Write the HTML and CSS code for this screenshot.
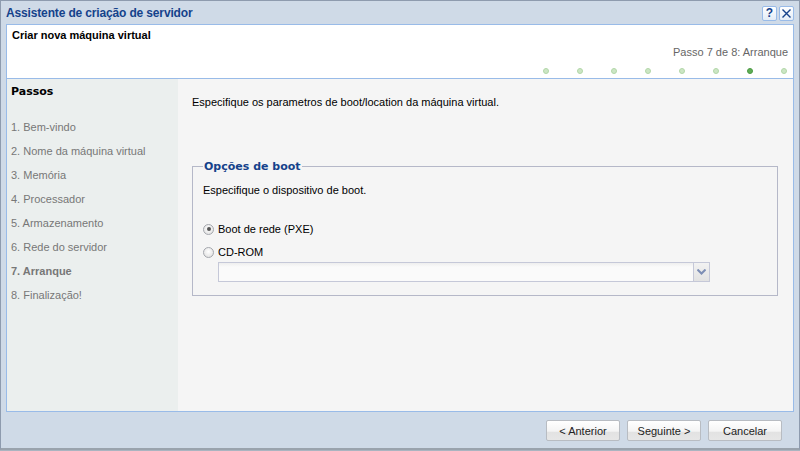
FILE: index.html
```html
<!DOCTYPE html>
<html lang="pt">
<head>
<meta charset="utf-8">
<title>Assistente de criação de servidor</title>
<link rel="stylesheet" href="styles.css">
</head>
<body>
<div class="win">
  <div class="titlebar">
    <span class="title">Assistente de criação de servidor</span>
    <div class="tools">
      <span class="tool">?</span>
      <span class="tool">
        <svg width="11" height="11" viewBox="0 0 11 11"><path d="M1.5 1.5 L9.5 9.5 M9.5 1.5 L1.5 9.5" stroke="#15428b" stroke-width="1.4" fill="none"/></svg>
      </span>
    </div>
  </div>
  <div class="header">
    <div class="h-title">Criar nova máquina virtual</div>
    <div class="h-step">Passo 7 de 8: Arranque</div>
    <div class="dots">
      <span class="dot"></span><span class="dot"></span><span class="dot"></span><span class="dot"></span>
      <span class="dot"></span><span class="dot"></span><span class="dot cur"></span><span class="dot"></span>
    </div>
  </div>
  <div class="body">
    <div class="side">
      <div class="side-title">Passos</div>
      <ul class="steps">
        <li>1. Bem-vindo</li>
        <li>2. Nome da máquina virtual</li>
        <li>3. Memória</li>
        <li>4. Processador</li>
        <li>5. Armazenamento</li>
        <li>6. Rede do servidor</li>
        <li class="active">7. Arranque</li>
        <li>8. Finalização!</li>
      </ul>
    </div>
    <div class="content">
      <p class="intro">Especifique os parametros de boot/location da máquina virtual.</p>
      <fieldset class="fs">
        <legend>Opções de boot</legend>
        <p class="fs-text">Especifique o dispositivo de boot.</p>
        <label class="radio"><span class="rb checked"></span>Boot de rede (PXE)</label>
        <label class="radio"><span class="rb"></span>CD-ROM</label>
        <div class="combo">
          <div class="combo-field"></div>
          <div class="combo-trigger">
            <svg width="9" height="6" viewBox="0 0 9 6"><path d="M0.5 0.5 L4.5 4.5 L8.5 0.5" stroke="#7d8eb5" stroke-width="2" fill="none"/></svg>
          </div>
        </div>
      </fieldset>
    </div>
  </div>
  <div class="footer">
    <button class="btn">&lt; Anterior</button>
    <button class="btn">Seguinte &gt;</button>
    <button class="btn">Cancelar</button>
  </div>
</div>
</body>
</html>
```
FILE: styles.css
```css
* { box-sizing: border-box; }
html, body { margin: 0; padding: 0; background: #aab4c0; }
body { font-family: "Liberation Sans", Arial, sans-serif; font-size: 11px; }
.win {
  width: 800px; height: 450px;
  background: #cfdae7;
  border: 1px solid #8e9bae;
  border-bottom: 2px solid #9aa3ad;
  display: flex; flex-direction: column;
}
.titlebar {
  height: 23px; display: flex; align-items: center; justify-content: space-between;
  padding: 0 5px 0 5px;
}
.title { color: #15428b; font-weight: bold; font-size: 12px; letter-spacing: -0.15px; }
.tools { display: flex; gap: 2px; margin-top: 1px; }
.tool {
  width: 15px; height: 15px; border: 1px solid #99bbe8; border-radius: 2px;
  background: linear-gradient(#ffffff, #e3ecf7);
  color: #15428b; font-weight: bold; font-size: 12px;
  display: flex; align-items: center; justify-content: center; line-height: 1;
}
.header {
  margin: 0 5px; height: 54px; background: #fff;
  border: 1px solid #99bbe8; border-bottom: none;
  padding: 3px 5px 0 5px;
}
.h-title { font-weight: bold; font-size: 11px; color: #000; height: 14px; line-height: 14px; }
.h-step { text-align: right; color: #666; font-size: 11px; margin-top: 3px; line-height: 14px; }
.dots { display: flex; justify-content: flex-end; gap: 28px; margin-top: 9px; padding-right: 1px; }
.dot {
  width: 6px; height: 6px; border-radius: 50%;
  background: #cce6c4; border: 1px solid #b2d7a8;
}
.dot.cur { background: #5fae55; border-color: #4c9a44; }
.body {
  margin: 0 5px; height: 334px; display: flex;
  border: 1px solid #99bbe8;
}
.side { width: 171px; background: #ebefee; padding: 6px 4px; }
.side-title { font-family: "DejaVu Sans", sans-serif; font-weight: bold; font-size: 11px; color: #000; line-height: 14px; }
.steps { list-style: none; margin: 21px 0 0 0; padding: 0; }
.steps li { color: #777; line-height: 14px; height: 24px; }
.steps li.active { font-weight: bold; }
.content { flex: 1; background: #f5f5f5; padding: 0 15px 0 14px; }
.intro { margin: 16px 0 0 0; line-height: 14px; color: #000; }
.fs {
  margin: 51px 0 0 0; padding: 4px 10px 13px 10px;
  border: 1px solid #b5b8c8; min-width: 0;
}
.fs legend {
  color: #15428b; font-weight: bold; font-family: "DejaVu Sans", sans-serif; font-size: 11px;
  padding: 0 1px; margin-left: 0;
}
.fs-text { margin: 6px 0 0 0; line-height: 14px; }
.radio { display: flex; align-items: center; gap: 4px; line-height: 14px; margin-top: 25px; }
.radio + .radio { margin-top: 9px; }
.rb {
  width: 11px; height: 11px; border-radius: 50%;
  border: 1px solid #a4a7ad;
  background: radial-gradient(circle at 50% 40%, #ffffff, #dcdcdc);
  position: relative;
}
.rb.checked::after {
  content: ""; position: absolute; left: 2.5px; top: 2.5px; width: 4px; height: 4px;
  border-radius: 50%; background: #555;
}
.combo { display: flex; margin: 3px 0 0 15px; width: 492px; height: 20px; }
.combo-field {
  flex: 1; border: 1px solid #c5c8d8; border-right: none;
  background: linear-gradient(#eeeeee 0, #fafafa 4px, #fafafa);
}
.combo-trigger {
  width: 17px; border: 1px solid #c5c8d8; background: linear-gradient(#f2f2f2, #e2e2e2);
  display: flex; align-items: center; justify-content: center;
}
.footer {
  flex: 1; display: flex; justify-content: flex-end; align-items: flex-start;
  gap: 7px; padding: 8px 17px 0 0;
}
.btn {
  width: 74px; height: 21px; margin: 0; padding: 0;
  font-family: "Liberation Sans", Arial, sans-serif; font-size: 11px; color: #222;
  border: 1px solid #b8bcc2; border-radius: 2px;
  background: linear-gradient(#ffffff 0, #f4f4f4 55%, #e2e2e2 56%, #e6e6e6 100%);
}
```
